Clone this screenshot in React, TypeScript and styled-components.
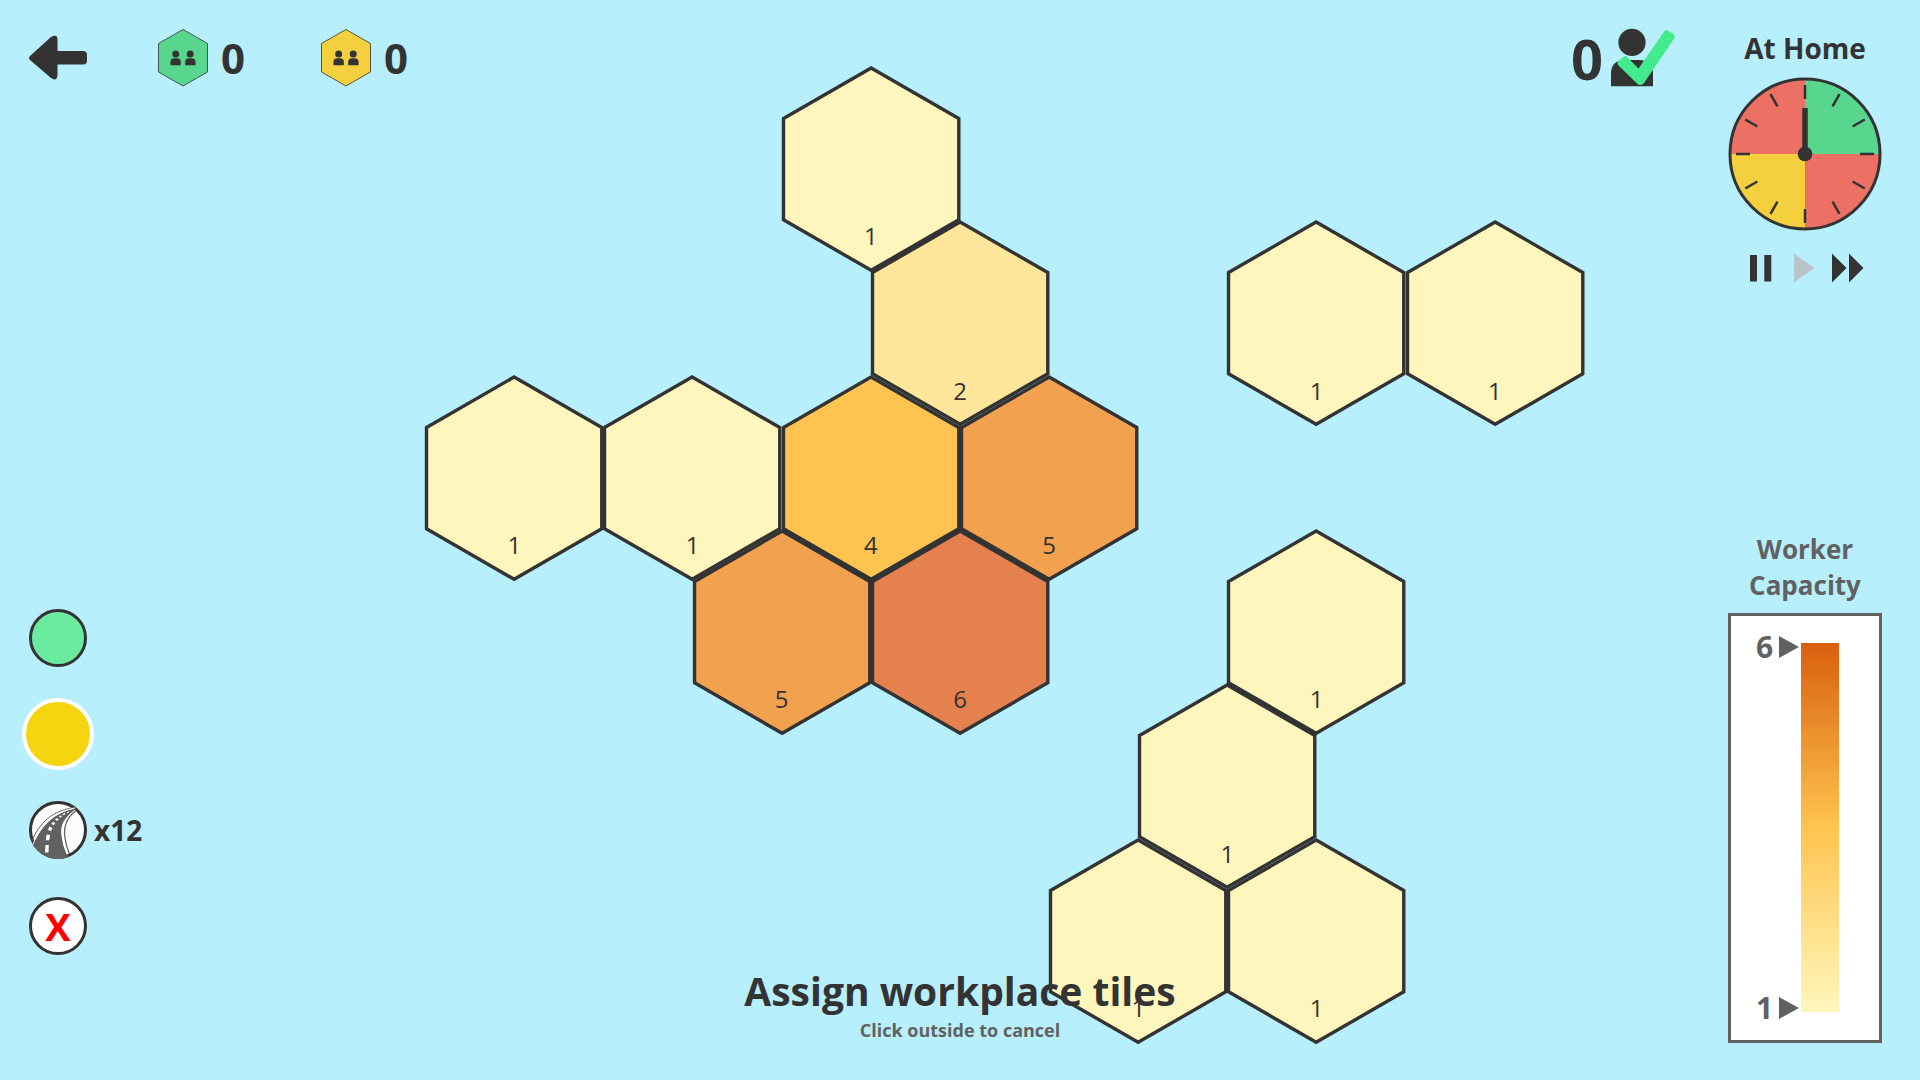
import React, { useState } from "react";
import styled, { createGlobalStyle } from "styled-components";

const ink = "#333333";
const muted = "#616161";
const sky = "#b7effc";

const GlobalStyle = createGlobalStyle`
  *, *::before, *::after { box-sizing: border-box; }
  body {
    margin: 0;
    background: ${sky};
    color: ${ink};
    font-family: "Open Sans", "Noto Sans", sans-serif;
  }
  button {
    margin: 0;
    padding: 0;
    border: 0;
    background: none;
    color: inherit;
    font: inherit;
    cursor: pointer;
  }
  svg { display: block; overflow: visible; }
`;

/* The map, the controls and the prompt share one grid cell and stack in order. */
const Screen = styled.div`
  display: grid;
  grid-template: minmax(100vh, auto) / minmax(0, 1fr);
  overflow: hidden;
  & > * { grid-area: 1 / 1; }
`;

const Board = styled.main`
  justify-self: center;
  align-self: start;
  width: 65%;
  margin-top: 92px;
  aspect-ratio: 1248 / 926;
  display: grid;
  grid-template-columns: repeat(14, minmax(0, 1fr));
  grid-template-rows: repeat(6, minmax(0, 1fr));
`;

const Tile = styled.button<{ $row: number; $col: number }>`
  grid-row: ${(p) => p.$row};
  grid-column: ${(p) => p.$col} / span 2;
  align-self: center;
  aspect-ratio: 178 / 206;
  display: grid;
  & > * { grid-area: 1 / 1; }
`;

const TileShape = styled.svg`
  width: 100%;
  height: 100%;
`;

const TileValue = styled.span`
  align-self: end;
  justify-self: center;
  padding-bottom: 20px;
  font-size: 24px;
  line-height: 32px;
  font-weight: 400;
`;

const Hud = styled.div`
  display: flex;
  justify-content: space-between;
  padding: 29px 38px 37px 29px;
  pointer-events: none;
  button { pointer-events: auto; }
`;

const Side = styled.div`
  display: flex;
  flex-direction: column;
  justify-content: space-between;
`;

const TopBar = styled.header`
  display: flex;
  align-items: center;
  gap: 71px;
  height: 58px;
`;

const Tallies = styled.div`
  display: flex;
  gap: 76px;
`;

const Tally = styled.div`
  display: flex;
  align-items: center;
  gap: 13px;
  font-size: 42px;
  line-height: 58px;
  font-weight: 700;
`;

const Tools = styled.nav`
  display: grid;
  grid-auto-rows: 58px;
  gap: 38px;
  padding-bottom: 88px;
`;

const ToolRow = styled.div`
  display: grid;
  grid-template-columns: 58px auto;
  justify-content: start;
  align-items: center;
  justify-items: center;
  column-gap: 7px;
`;

const ToolButton = styled.button<{ $fill: string; $active?: boolean }>`
  display: grid;
  place-items: center;
  flex: none;
  width: ${(p) => (p.$active ? 72 : 58)}px;
  height: ${(p) => (p.$active ? 72 : 58)}px;
  margin: ${(p) => (p.$active ? -7 : 0)}px;
  border: ${(p) => (p.$active ? "4px solid #ffffff" : `3px solid ${ink}`)};
  border-radius: 50%;
  background: ${(p) => p.$fill};
  color: #ff0000;
  font-size: 38px;
  line-height: 52px;
  font-weight: 700;
`;

const RoadButton = styled.button`
  width: 58px;
  height: 58px;
`;

const ToolCount = styled.span`
  font-size: 28px;
  line-height: 38px;
  font-weight: 700;
`;

const RightGroup = styled.div`
  display: flex;
  gap: 53px;
`;

const Score = styled.div`
  display: flex;
  align-items: center;
  gap: 8px;
  height: 58px;
  font-size: 56px;
  line-height: 58px;
  font-weight: 700;
`;

const RightColumn = styled(Side)`
  width: 154px;
`;

const ClockPanel = styled.section`
  display: flex;
  flex-direction: column;
  align-items: center;
`;

const Phase = styled.h2`
  margin: 0 0 10px;
  font-size: 28px;
  line-height: 38px;
  font-weight: 700;
  white-space: nowrap;
`;

const Speeds = styled.div`
  display: flex;
  align-items: center;
  justify-content: space-between;
  width: 114px;
  margin-top: 22px;
`;

const Legend = styled.section`
  color: ${muted};
  font-weight: 700;
`;

const LegendTitle = styled.h2`
  margin: 0 0 10px;
  font-size: 26px;
  line-height: 36px;
  font-weight: 700;
  text-align: center;
`;

const Scale = styled.div`
  display: flex;
  justify-content: flex-start;
  gap: 2px;
  padding: 27px 24px 28px 25px;
  border: 3px solid ${muted};
  background: #ffffff;
`;

const Marks = styled.div`
  display: flex;
  flex-direction: column;
  justify-content: space-between;
`;

const Mark = styled.div`
  display: flex;
  align-items: center;
  gap: 6px;
  height: 8px;
  font-size: 30px;
  line-height: 40px;
`;

const Ramp = styled.div`
  width: 38px;
  height: 369px;
  background: linear-gradient(#d95f0e, #fec44f, #fff7bc);
`;

const Prompt = styled.div`
  align-self: end;
  justify-self: center;
  padding-bottom: 37px;
  text-align: center;
  pointer-events: none;
`;

const PromptTitle = styled.h1`
  margin: 0;
  font-size: 39px;
  line-height: 52px;
  font-weight: 700;
`;

const PromptHint = styled.p`
  margin: 0;
  color: ${muted};
  font-size: 18px;
  line-height: 26px;
  font-weight: 700;
`;

const tiles = [
  { row: 1, col: 6, value: 1 },
  { row: 2, col: 7, value: 2 },
  { row: 2, col: 11, value: 1 },
  { row: 2, col: 13, value: 1 },
  { row: 3, col: 2, value: 1 },
  { row: 3, col: 4, value: 1 },
  { row: 3, col: 6, value: 4 },
  { row: 3, col: 8, value: 5 },
  { row: 4, col: 5, value: 5 },
  { row: 4, col: 7, value: 6 },
  { row: 4, col: 11, value: 1 },
  { row: 5, col: 10, value: 1 },
  { row: 6, col: 9, value: 1 },
  { row: 6, col: 11, value: 1 },
];

const tileFill: Record<number, string> = {
  1: "#fff6bd",
  2: "#ffe69a",
  4: "#ffc450",
  5: "#f2a24f",
  6: "#e5804f",
};

function BackArrow() {
  return (
    <svg width="58" height="58" viewBox="0 0 58 58" fill={ink}>
      <path d="M1 27 L22 8 Q28 4.500 28.500 10 V22 H54 Q58 22 58 26 V31.500 Q58 35.500 54 35.500 H28.500 V46 Q28 53 22 49 L1 31 Q-1 29 1 27Z" />
    </svg>
  );
}

function PairHex({ fill }: { fill: string }) {
  return (
    <svg width="50" height="58" viewBox="0 0 50 58">
      <path d="M25 .500 L49.500 14.500 V43 L25 57 L.500 43 V14.500Z" fill={fill} stroke={ink} strokeOpacity=".8" />
      <g fill={ink}>
        <circle cx="17.700" cy="25" r="3.500" />
        <path d="M12.500 36.300 V33 Q12.500 29.300 16.500 29.300 H19 Q22.800 29.300 22.800 33 V36.300Z" />
        <circle cx="32.200" cy="25" r="3.500" />
        <path d="M27.200 36.300 V33 Q27.200 29.300 31 29.300 H33.500 Q37.500 29.300 37.500 33 V36.300Z" />
      </g>
    </svg>
  );
}

function HappyWorker() {
  return (
    <svg width="64" height="58" viewBox="0 0 64 58">
      <circle cx="21" cy="13.400" r="13.600" fill={ink} />
      <path d="M0 57.300 V45 Q0 31 14 31 H28 Q42 31 42 45 V57.300Z" fill={ink} />
      <path
        d="M6.500 34.500 Q6 33 7.500 32 L13 27.500 Q14.500 26.500 16 28 L27.500 39.500 L53.500 2 Q55 .300 57.500 1.700 L63 5.500 Q64.500 7 63.500 9 L33 54 Q31.500 56 29.500 56 Q27.500 56 26 54.500 L7.500 36.500 Q6.500 35.500 6.500 34.500Z"
        fill="#44eb8c"
      />
    </svg>
  );
}

function Clock() {
  const ticks = Array.from({ length: 12 }, (_, i) => i * 30);
  return (
    <svg width="154" height="154" viewBox="0 0 154 154" role="img" aria-label="Clock">
      <path d="M77 77 V2 A75 75 0 0 1 152 77Z" fill="#58d68d" />
      <path d="M77 77 H152 A75 75 0 0 1 77 152Z" fill="#ec7063" />
      <path d="M77 77 V152 A75 75 0 0 1 2 77Z" fill="#f4d03f" />
      <path d="M77 77 H2 A75 75 0 0 1 77 2Z" fill="#ec7063" />
      <circle cx="77" cy="77" r="75" fill="none" stroke={ink} strokeWidth="3" />
      <g stroke={ink} strokeWidth="2.500">
        {ticks.map((a) => (
          <line key={a} x1="77" y1="8" x2="77" y2="22" transform={`rotate(${a} 77 77)`} />
        ))}
      </g>
      <line x1="77" y1="77" x2="77" y2="31" stroke={ink} strokeWidth="5.500" />
      <circle cx="77" cy="77" r="7.300" fill={ink} />
    </svg>
  );
}

function Road() {
  return (
    <svg width="58" height="58" viewBox="0 0 58 58">
      <defs>
        <clipPath id="road-disc">
          <circle cx="29" cy="29" r="29" />
        </clipPath>
      </defs>
      <circle cx="29" cy="29" r="27.500" fill="#fdfdfd" stroke={ink} strokeWidth="3" />
      <g clipPath="url(#road-disc)">
        <path d="M3 46 C12 25 24 12 46 7.500 L47 9 C34 17 31 25 32.500 35 Q33.500 44 37 52 L41 58 H8Z" fill={muted} />
        <path d="M3 40 C10 22 24 9 46 6.500" fill="none" stroke={muted} strokeWidth="1" />
        <path d="M4 43 C12 24 25 11 46 7" fill="none" stroke="#ffffff" strokeWidth="1" />
        <path d="M46 9.500 C34 18 33 28 34.500 37 Q35.500 45 38.500 52" fill="none" stroke="#ffffff" strokeWidth="1.500" />
        <path d="M47 9.500 C36 18 34.500 28 36 37 Q37 45 40.500 53" fill="none" stroke={muted} strokeWidth="1.300" />
        <g fill="#ffffff">
          <path d="M16.500 44 H19.800 L19.500 51.500 H16Z" />
          <path d="M17.500 33.500 L21 34 L20.300 39.300 H16.800Z" />
          <path d="M20.300 25.500 L23.300 27 L22.200 30 L19 29Z" />
          <path d="M24 20.800 L26.300 22.200 L24.700 24.200 L22.300 22.800Z" />
          <path d="M27.800 17 L29.800 18.500 L28 20 L26 18.500Z" />
          <path d="M31.500 14.300 L33 15.600 L31.200 16.800 L29.800 15.500Z" />
          <path d="M35.500 12 L36.700 13 L34.500 14.300 L33.500 13.200Z" />
          <path d="M39.500 10.400 L40.300 11.200 L38.300 12.200 L37.500 11.300Z" />
        </g>
      </g>
    </svg>
  );
}

function Pointer() {
  return (
    <svg width="20" height="22" viewBox="0 0 20 22" fill={muted}>
      <path d="M0 0 L20 11 L0 22Z" />
    </svg>
  );
}

type Tool = "home" | "work" | "road" | "clear";

export default function App() {
  const [tool, setTool] = useState<Tool>("work");
  return (
    <>
      <GlobalStyle />
      <Screen>
        <Board>
          {tiles.map((t) => (
            <Tile key={`${t.row}-${t.col}`} $row={t.row} $col={t.col}>
              <TileShape viewBox="0 0 178 206">
                <path
                  d="M89 2 L176.500 52.500 V153.500 L89 204 L1.500 153.500 V52.500Z"
                  fill={tileFill[t.value]}
                  stroke={ink}
                  strokeWidth="3.400"
                />
              </TileShape>
              <TileValue>{t.value}</TileValue>
            </Tile>
          ))}
        </Board>

        <Hud>
          <Side>
            <TopBar>
              <button aria-label="Back">
                <BackArrow />
              </button>
              <Tallies>
                <Tally>
                  <PairHex fill="#58d68d" />0
                </Tally>
                <Tally>
                  <PairHex fill="#f4d03f" />0
                </Tally>
              </Tallies>
            </TopBar>
            <Tools aria-label="Tools">
              <ToolRow>
                <ToolButton aria-label="Home tiles" $fill="#6aeb9f" $active={tool === "home"} onClick={() => setTool("home")} />
              </ToolRow>
              <ToolRow>
                <ToolButton aria-label="Workplace tiles" $fill="#f5d50f" $active={tool === "work"} onClick={() => setTool("work")} />
              </ToolRow>
              <ToolRow>
                <RoadButton aria-label="Roads" onClick={() => setTool("road")}>
                  <Road />
                </RoadButton>
                <ToolCount>x12</ToolCount>
              </ToolRow>
              <ToolRow>
                <ToolButton $fill="#ffffff" $active={tool === "clear"} onClick={() => setTool("clear")}>
                  X
                </ToolButton>
              </ToolRow>
            </Tools>
          </Side>

          <RightGroup>
            <Score>
              0<HappyWorker />
            </Score>
            <RightColumn>
              <ClockPanel>
                <Phase>At Home</Phase>
                <Clock />
                <Speeds>
                  <button aria-label="Pause">
                    <svg width="24" height="30" viewBox="0 0 24 30" fill={ink}>
                      <path d="M2 2 H9 V28.500 H2Z M16.300 2 H23.300 V28.500 H16.300Z" />
                    </svg>
                  </button>
                  <button aria-label="Play">
                    <svg width="26" height="30" viewBox="0 0 26 30" fill="#b8c4c8">
                      <path d="M6 .500 L26.500 15 L6 29.500Z" />
                    </svg>
                  </button>
                  <button aria-label="Fast forward">
                    <svg width="32" height="30" viewBox="0 0 32 30" fill={ink}>
                      <path d="M2 .500 L16.500 15 L2 29.500Z M19 .500 L33.500 15 L19 29.500Z" />
                    </svg>
                  </button>
                </Speeds>
              </ClockPanel>
              <Legend>
                <LegendTitle>Worker Capacity</LegendTitle>
                <Scale>
                  <Marks>
                    <Mark>
                      6<Pointer />
                    </Mark>
                    <Mark>
                      1<Pointer />
                    </Mark>
                  </Marks>
                  <Ramp />
                </Scale>
              </Legend>
            </RightColumn>
          </RightGroup>
        </Hud>

        <Prompt>
          <PromptTitle>Assign workplace tiles</PromptTitle>
          <PromptHint>Click outside to cancel</PromptHint>
        </Prompt>
      </Screen>
    </>
  );
}
